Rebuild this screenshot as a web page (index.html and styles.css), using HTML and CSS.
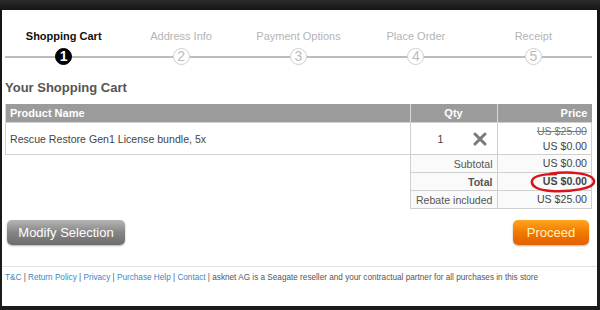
FILE: index.html
```html
<!DOCTYPE html>
<html lang="en">
<head>
    <meta charset="UTF-8" />
    <title>Your Shopping Cart</title>
    <link rel="stylesheet" href="styles.css">
</head>
<body>
    <div class="shop">
        <!-- checkout progress -->
        <div class="steps">
            <div class="step active"><span class="step-label">Shopping Cart</span><span class="step-num">1</span></div>
            <div class="step"><span class="step-label">Address Info</span><span class="step-num">2</span></div>
            <div class="step"><span class="step-label">Payment Options</span><span class="step-num">3</span></div>
            <div class="step"><span class="step-label">Place Order</span><span class="step-num">4</span></div>
            <div class="step"><span class="step-label">Receipt</span><span class="step-num">5</span></div>
        </div>

        <h2>Your Shopping Cart</h2>

        <table class="cart">
            <tr>
                <th class="col-name">Product Name</th>
                <th class="col-qty">Qty</th>
                <th class="col-price">Price</th>
            </tr>
            <tr class="item">
                <td>Rescue Restore Gen1 License bundle, 5x</td>
                <td class="qty">
                    <span class="qty-num">1</span>
                    <svg class="remove" width="14" height="14" viewBox="0 0 14 14">
                        <path d="M2 2 L12 12 M12 2 L2 12" stroke="#7a7a7a" stroke-width="3" stroke-linecap="round" />
                    </svg>
                </td>
                <td class="price"><s>US $25.00</s><br>US $0.00</td>
            </tr>
            <tr class="sum">
                <td class="blank"></td>
                <td class="label">Subtotal</td>
                <td class="price">US $0.00</td>
            </tr>
            <tr class="sum">
                <td class="blank"></td>
                <td class="label total">Total</td>
                <td class="price total">
                    US $0.00
                    <svg class="mark" width="68" height="22" viewBox="0 0 68 22">
                        <path d="M20 3 C40 0 64 2 65 10 C66 18 40 21 22 20 C8 19 2 15 3 10 C4 5 14 3 28 3" fill="none" stroke="#d8141a" stroke-width="2.5" />
                    </svg>
                </td>
            </tr>
            <tr class="sum">
                <td class="blank"></td>
                <td class="label">Rebate included</td>
                <td class="price">US $25.00</td>
            </tr>
        </table>

        <div class="actions">
            <button class="btn btn-gray">Modify Selection</button>
            <button class="btn btn-orange">Proceed</button>
        </div>

        <div class="footer">
            <a href="#">T&amp;C</a> | <a href="#">Return Policy</a> | <a href="#">Privacy</a> | <a href="#">Purchase Help</a> | <a href="#">Contact</a> | asknet AG is a Seagate reseller and your contractual partner for all purchases in this store
        </div>
    </div>
</body>
</html>
```

FILE: styles.css
```css
body {
    margin: 0;
    height: 310px;
    background: linear-gradient(#2c2c2c, #151515 10px, #1c1c1c);
    font-family: "Liberation Sans", Arial, sans-serif;
    overflow: hidden;
}
.shop {
    margin: 10px 3px 0 2px;
    height: 296px;
    background-color: #ffffff;
    padding: 0 5px 0 3px;
    box-sizing: border-box;
}
.steps {
    position: relative;
    display: grid;
    grid-template-columns: repeat(5, 1fr);
    padding-top: 20px;
}
.steps::before {
    content: "";
    position: absolute;
    left: 0;
    right: 0;
    top: 46px;
    height: 2px;
    background-color: #bdbdbd;
}
.step {
    display: flex;
    flex-direction: column;
    align-items: center;
    gap: 6px;
}
.step-label {
    font-size: 11px;
    color: #b4b4b4;
}
.step-num {
    position: relative;
    width: 15px;
    height: 15px;
    border: 1.5px solid #cfcfcf;
    border-radius: 50%;
    background-color: #ffffff;
    color: #bcbcbc;
    font-size: 14px;
    line-height: 15px;
    text-align: center;
}
.active .step-label {
    color: #111;
    font-weight: bold;
}
.active .step-num {
    background-color: #000;
    border-color: #000;
    color: #fff;
    font-weight: bold;
}
h2 {
    margin: 15px 0 9px 0;
    font-size: 13px;
    color: #555;
}
.cart {
    width: 100%;
    border-collapse: collapse;
    font-size: 10.6px;
    color: #444;
}
.cart th {
    background-color: #9b9b9b;
    color: #fff;
    font-size: 11px;
    height: 18px;
    padding: 0 4px;
    border-left: 1px solid #d8d8d8;
}
.col-name {
    text-align: left;
}
.col-qty {
    width: 78px;
}
.col-price {
    width: 86px;
    text-align: right;
}
.cart td {
    border: 1px solid #cfcfcf;
    padding: 0 4px;
    white-space: nowrap;
}
.item td {
    height: 31px;
}
.qty {
    position: relative;
}
.qty-num {
    margin-left: 23px;
}
.remove {
    position: absolute;
    left: 62px;
    top: 9px;
}
.price {
    text-align: right;
    line-height: 15px;
}
.price s {
    color: #777;
}
.sum td {
    height: 17px;
    background-color: #fafafa;
}
.cart td.blank {
    border: none;
    background-color: #fff;
}
.sum .label {
    text-align: right;
    color: #555;
}
.total {
    position: relative;
    font-weight: bold;
}
.mark {
    position: absolute;
    right: -6px;
    top: -2px;
}
.actions {
    display: flex;
    justify-content: space-between;
    padding: 11px 0 0 2px;
}
.btn {
    height: 25px;
    padding: 0;
    border: none;
    border-radius: 5px;
    font-family: "Liberation Sans", Arial, sans-serif;
    font-size: 13px;
    cursor: pointer;
    box-shadow: 0 1px 2px rgba(0, 0, 0, 0.3);
}
.btn-gray {
    width: 118px;
    color: #fff;
    background: linear-gradient(#b5b5b5, #858585 50%, #6c6c6c);
}
.btn-orange {
    width: 76px;
    margin-right: 3px;
    color: #fff2c2;
    background: linear-gradient(#ffa51f, #f07a00 50%, #e25f00);
}
.footer {
    margin: 21px -5px 0 -3px;
    padding: 6px 3px;
    border-top: 1px solid #e2e2e2;
    font-size: 8.2px;
    color: #555;
}
.footer a {
    color: #3d86c6;
    text-decoration: none;
}
```
